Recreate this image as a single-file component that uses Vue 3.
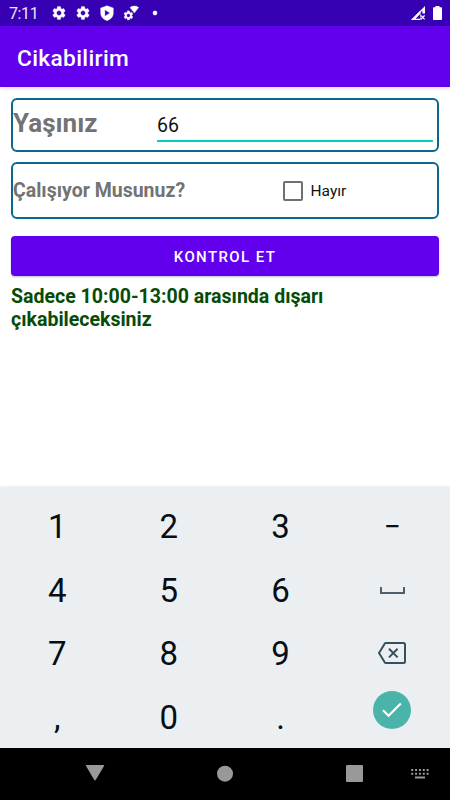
<script setup>
import { ref } from 'vue'

const age = ref('66')
const working = ref(false)
const gear = 'M19.14 12.94c.04-.3.06-.61.06-.94 0-.32-.02-.64-.07-.94l2.03-1.58c.18-.14.23-.41.12-.61l-1.92-3.32c-.12-.22-.37-.29-.59-.22l-2.39.96c-.5-.38-1.03-.7-1.62-.94l-.36-2.54c-.04-.24-.24-.41-.48-.41h-3.84c-.24 0-.43.17-.47.41l-.36 2.54c-.59.24-1.13.57-1.62.94l-2.39-.96c-.22-.08-.47 0-.59.22L2.74 8.87c-.12.21-.08.47.12.61l2.03 1.58c-.05.3-.09.63-.09.94s.02.64.07.94l-2.03 1.58c-.18.14-.23.41-.12.61l1.92 3.32c.12.22.37.29.59.22l2.39-.96c.5.38 1.03.7 1.62.94l.36 2.54c.05.24.24.41.48.41h3.84c.24 0 .44-.17.47-.41l.36-2.54c.59-.24 1.13-.56 1.62-.94l2.39.96c.22.08.47 0 .59-.22l1.92-3.32c.12-.22.07-.47-.12-.61l-2.01-1.58zM12 15.6c-1.98 0-3.6-1.62-3.6-3.6s1.62-3.6 3.6-3.6 3.6 1.62 3.6 3.6-1.62 3.6-3.6 3.6z'
const keys = ['1', '2', '3', '−', '4', '5', '6', 'space', '7', '8', '9', 'back', ',', '0', '.', 'done']
const press = (key) => {
  if (key === 'back') age.value = age.value.slice(0, -1)
  else if (/^\d$/.test(key)) age.value += key
}
</script>

<template>
  <div class="screen">
    <header class="status">
      <span class="clock">7:11</span>
      <div class="notifications">
        <svg viewBox="0 0 24 24"><path :d="gear" /></svg>
        <svg viewBox="0 0 24 24"><path :d="gear" /></svg>
        <svg viewBox="0 0 24 24"><path fill-rule="evenodd" d="M12 1 21.500 4.500v7.500c0 5.500-3.800 9.600-9.500 11.500C6.300 21.600 2.500 17.500 2.500 12V4.500zM8.800 7.200v9.600l7.600-4.800z" /></svg>
        <svg viewBox="0 0 24 24">
          <g transform="translate(-.5 7) scale(.72)"><path :d="gear" /></g>
          <path d="M10.500 3.600C14.500.8 19.500.8 23.500 3.600L17 12z" />
        </svg>
        <svg viewBox="0 0 24 24"><circle cx="12" cy="12" r="3.200" /></svg>
      </div>
      <div class="system">
        <svg class="signal" viewBox="0 0 14 14">
          <path d="M0 14 14 0v7.500h-2.600V4.500L9 7v7z" />
          <path d="M0 14 9.500 4.500V14z" />
          <path class="hollow" d="M4.500 12.700 9 8.200v4.500z" />
          <path class="cross" d="m9.800 9.400 3.800 4M13.600 9.400l-3.800 4" />
        </svg>
        <svg class="battery" viewBox="0 0 9 14"><path d="M2.500 0h4v1.300H8c.6 0 1 .4 1 1V13c0 .6-.4 1-1 1H1c-.6 0-1-.4-1-1V2.300c0-.6.4-1 1-1h1.500z" /></svg>
      </div>
    </header>
    <div class="appbar"><h1>Cikabilirim</h1></div>

    <main>
      <section class="card age">
        <label>Yaşınız</label>
        <div class="field">{{ age }}</div>
      </section>
      <section class="card work">
        <label>Çalışıyor Musunuz?</label>
        <div class="check" @click="working = !working">
          <span class="box" :class="{ on: working }"></span>
          <span>Hayır</span>
        </div>
      </section>
      <button class="submit">KONTROL ET</button>
      <p class="result">Sadece 10:00-13:00 arasında dışarı çıkabileceksiniz</p>
    </main>

    <div class="keyboard">
      <div v-for="key in keys" :key="key" class="key" @click="press(key)">
        <svg v-if="key === 'space'" class="space" viewBox="0 0 25 7"><path d="M1 0v6h23V0" /></svg>
        <svg v-else-if="key === 'back'" class="back" viewBox="0 0 28 22">
          <path d="M8 1h17.500q1.500 0 1.500 1.500v17q0 1.500-1.500 1.500H8Q7.200 21 6.700 20.300L1 11l5.700-9.300Q7.200 1 8 1z" />
          <path d="m11 6.800 8.600 8.600M19.600 6.800 11 15.400" />
        </svg>
        <span v-else-if="key === 'done'" class="done">
          <svg viewBox="0 0 20 16"><path d="m1 8.300 5.600 5.500L18.800 1.500" /></svg>
        </span>
        <span v-else-if="key === '−'" class="minus">{{ key }}</span>
        <span v-else>{{ key }}</span>
      </div>
    </div>

    <nav>
      <svg viewBox="0 0 450 52">
        <path d="M86.500 17h17q.9.100.5.900l-8.300 14.200q-.7.900-1.400 0L86 17.900q-.4-.8.500-.900z" />
        <circle cx="225" cy="25.700" r="8" />
        <rect x="346" y="17" width="17" height="17" rx="1" />
        <path class="dots" d="M411.200 22h17.500M411.200 25.700h17.500" />
        <path class="bar" d="M415 29.500h10" />
      </svg>
    </nav>
  </div>
</template>

<style>
body { margin: 0; background: #fff; }
</style>

<style scoped>
* { box-sizing: border-box; }
.screen { width: 450px; height: 800px; display: flex; flex-direction: column; overflow: hidden; background: #fff; font-family: Roboto, "Noto Sans", sans-serif; }
svg { display: block; }
.status { height: 26px; flex: none; display: flex; align-items: center; background: #3700b3; color: #fff; padding: 0 8px 0 9px; }
.clock { width: 41.500px; font-size: 16px; line-height: 26px; letter-spacing: -.4px; padding-top: 2px; opacity: .9; }
.notifications { display: flex; gap: 8px; }
.notifications svg { width: 16px; height: 16px; fill: #fff; stroke: #fff; stroke-width: .5; }
.system { margin-left: auto; display: flex; gap: 8px; }
.signal { width: 14px; height: 14px; fill: #fff; }
.signal .hollow { fill: #3700b3; }
.cross { stroke: #fff; stroke-width: 1.3; }
.battery { width: 9px; height: 14px; fill: #fff; }
.appbar { height: 61px; flex: none; background: #6200ee; color: #fff; display: flex; align-items: center; padding: 4px 17px 0; box-shadow: 0 1px 4px rgba(0, 0, 0, .18); }
h1 { margin: 0; font-size: 22.700px; font-weight: 500; line-height: 28px; letter-spacing: .35px; }
main { flex: 1; padding: 11px 11px 0; }
.card { border: 2px solid #08698a; border-radius: 6px; display: flex; }
.card label { color: #737373; font-weight: 700; }
.age { height: 54px; }
.age label { width: 144px; font-size: 26px; line-height: 46px; }
.field { flex: 1; height: 42px; margin-right: 4px; border-bottom: 2px solid #03d0bd; font-size: 19.500px; line-height: 51px; color: #111; }
.work { height: 57px; margin-top: 10px; align-items: center; }
.work label { width: 270px; font-size: 19.500px; line-height: 24px; }
.check { display: flex; align-items: center; gap: 7.500px; font-size: 15.500px; color: #111; }
.box { width: 20px; height: 20px; border: 2px solid #707070; border-radius: 2px; }
.box.on { background: #03dac5; }
.submit { display: block; width: 100%; height: 40px; margin-top: 17px; border: 0; border-radius: 4px; background: #6200ee; color: #fff; font: 500 15px/40px Roboto, sans-serif; letter-spacing: 1.400px; padding: 1px 0 0; box-shadow: 0 1px 2px rgba(0, 0, 0, .25); }
.result { margin: 9px 0 0; width: 350px; color: #064b06; font-size: 19.550px; font-weight: 700; line-height: 23px; }
.keyboard { height: 261px; flex: none; background: #ebeff2; display: grid; grid-template-columns: repeat(4, 111.600px); grid-template-rows: repeat(4, 63.400px); padding: 8px 0 0 1.500px; box-shadow: 0 -1px 2px rgba(0, 0, 0, .06); }
.key { display: flex; align-items: center; justify-content: center; font-size: 33px; line-height: 40px; color: #070e14; }
.key > span:not(.done) { padding-top: 1.400px; }
.key > .minus:not(.done) { font-size: 30px; padding-top: 0; }
.space { width: 25px; height: 7px; fill: none; stroke: #4a606e; stroke-width: 2; }
.back { width: 28px; height: 22px; fill: none; stroke: #37505f; stroke-width: 2; }
.done { width: 38px; height: 38px; border-radius: 50%; background: #4bb4aa; display: grid; place-items: center; margin-bottom: 13px; }
.done svg { width: 20px; height: 16px; fill: none; stroke: #fff; stroke-width: 2.200; }
nav { height: 52px; flex: none; background: #000; }
nav svg { width: 450px; height: 52px; fill: #999; }
.dots { stroke: #999; stroke-width: 2; stroke-dasharray: 2 1.850; }
.bar { stroke: #999; stroke-width: 2; }
</style>
